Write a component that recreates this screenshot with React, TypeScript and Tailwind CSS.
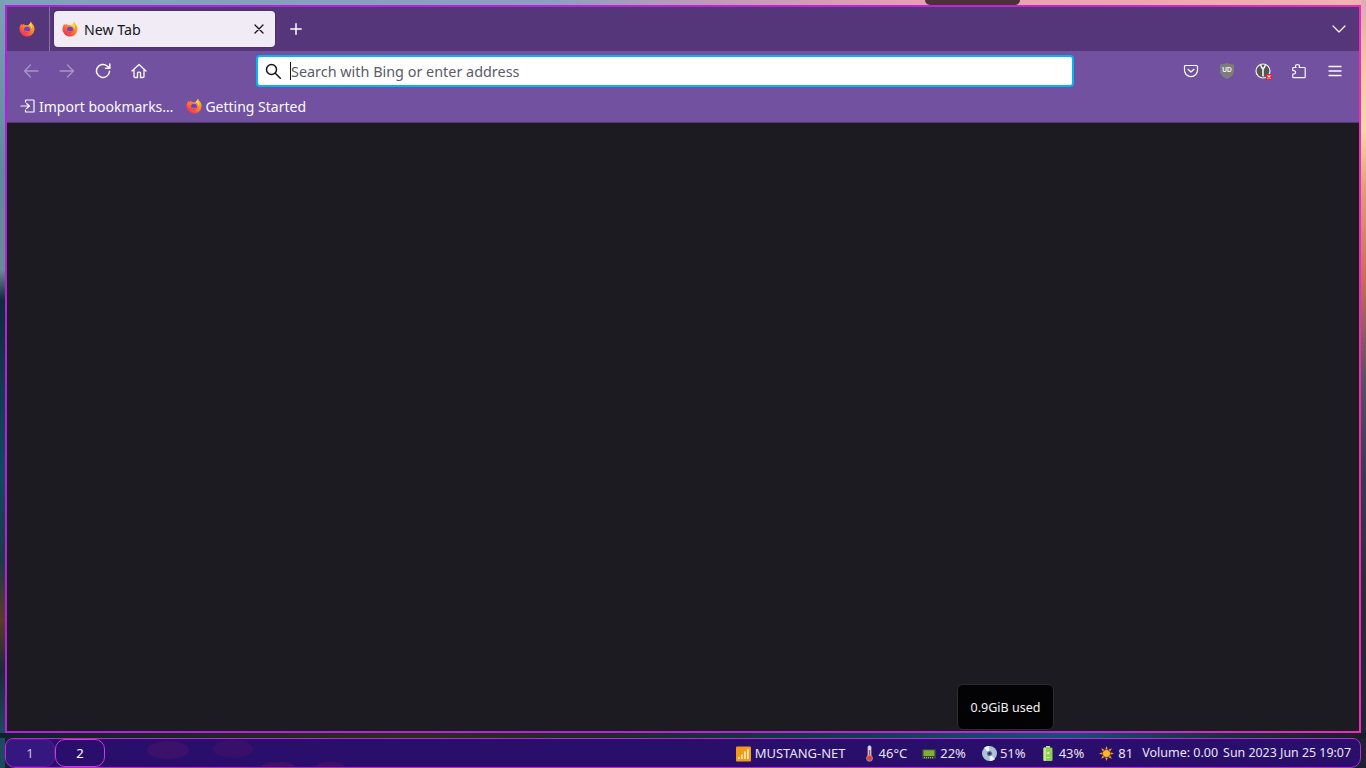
import React from "react";

function FirefoxLogo({ size = 16, id }: { size?: number; id: string }) {
  return (
    <svg width={size} height={size} viewBox="0 0 16 16" className="shrink-0">
      <defs>
        <linearGradient id={id} x1="0.85" y1="0.1" x2="0.2" y2="0.95">
          <stop offset="0" stopColor="#ffb52e" />
          <stop offset="0.5" stopColor="#ff7a2a" />
          <stop offset="1" stopColor="#ee2a5f" />
        </linearGradient>
      </defs>
      <path
        d="M12 .6c.3 1.2 1 1.9 1.9 3 1.1 1.4 1.700 3 1.600 4.800A7.500 7.500 0 1 1 1.600 4.100c.2-.5.5-.9.9-1.300 0 .6.2 1.100.6 1.500.5-.9 1.400-1.400 2.500-1.500.2 0 .3.100.2.200-.4.300-.7.700-.9 1.200 2.600-.8 5.700.1 6.800 2.300C12.400 4.600 11.300 2.600 12 .6z"
        fill={`url(#${id})`}
      />
      <circle cx="8" cy="8.800" r="3" fill="#6a3fd8" />
      <path d="M4.500 8.500c.5 2.400 3.300 3.800 5.600 2.700 1.200-.6 1.800-1.700 1.900-3-.800 1.200-2 1.900-3.500 1.800-1.700-.1-3-.5-4-1.500z" fill="#f9611f" />
      <path d="M8.800 4.600c1.900.2 3.400 1.500 3.700 3.200.9-1 1-2.800.1-4.300-.5-.8-.8-1.800-.6-2.900-.8 1.500-1.300 2.800-3.200 4z" fill="#ffd93b" />
    </svg>
  );
}

function Glyph({ d, size = 16, width = 1.4, dim = false }: { d: string; size?: number; width?: number; dim?: boolean }) {
  return (
    <svg
      width={size}
      height={size}
      viewBox="0 0 16 16"
      fill="none"
      stroke="#fbfbfe"
      strokeWidth={width}
      strokeLinecap="round"
      strokeLinejoin="round"
      className={dim ? "shrink-0 opacity-40" : "shrink-0"}
    >
      <path d={d} />
    </svg>
  );
}

function Pocket() {
  return (
    <svg width="16" height="16" viewBox="0 0 16 16" fill="none" stroke="#fbfbfe" strokeWidth="1.200" strokeLinecap="round" strokeLinejoin="round">
      <path d="M2.500 2.500h11c.6 0 1 .4 1 1v3.800A6.500 6.300 0 0 1 8 13.600 6.500 6.300 0 0 1 1.500 7.300V3.500c0-.6.4-1 1-1z" />
      <path d="M5 6.300l3 2.700 3-2.700" />
    </svg>
  );
}

function Ublock() {
  return (
    <svg width="16" height="16" viewBox="0 0 16 16">
      <path d="M8 0c2 .9 4.300 1.300 7 1.400v6.500c0 3.400-3 6.300-7 8.100-4-1.800-7-4.700-7-8.100V1.400C3.700 1.300 6 .9 8 0z" fill="#7d7d7d" />
      <text x="8" y="9.300" textAnchor="middle" fontSize="6.500" fontWeight="600" fill="#f4f4f4" fontFamily="'Liberation Sans', sans-serif">UD</text>
    </svg>
  );
}

function KeyExtension() {
  return (
    <svg width="17" height="17" viewBox="0 0 17 17">
      <circle cx="8" cy="8" r="7" fill="#555" stroke="#f4f4f4" strokeWidth="1.200" />
      <path d="M5 2.300C5.600 4.500 6.600 5.800 7.200 6.600v7h1.600v-7c.6-.8 1.600-2.100 2.200-4.300l-1.400-.5C9.300 3 8.700 4 8 4.800 7.300 4 6.700 3 6.400 1.800z" fill="#f4f4f4" />
      <rect x="11" y="11" width="6" height="6" fill="#ee1c3a" />
      <path d="M12.400 12.400l3.200 3.200M15.600 12.400l-3.200 3.200" stroke="#fff" strokeWidth="1.100" />
    </svg>
  );
}

function ImportIcon() {
  return (
    <svg width="16" height="16" viewBox="0 0 16 16" fill="none" stroke="#fbfbfe" strokeWidth="1.200" strokeLinejoin="round" strokeLinecap="round">
      <path d="M5.500 4V2.600c0-.4.300-.6.600-.6h7.300c.4 0 .6.300.6.600v10.800c0 .4-.3.600-.6.600H6.100c-.4 0-.6-.3-.6-.6V12" />
      <path d="M1 8h8M6.500 5.500L9.500 8l-3 2.500" />
    </svg>
  );
}

function WifiEmoji() {
  return (
    <svg width="15" height="16" viewBox="0 0 15 16">
      <rect x="0" y="0.500" width="15" height="15" rx="1" fill="#f59a16" />
      <path d="M2 13h1.800v-2H2zM5 13h1.800V8.500H5zM8 13h1.800V5.500H8zM11 13h1.800V3H11z" fill="#ffe6b8" />
    </svg>
  );
}

function ThermoEmoji() {
  return (
    <svg width="11" height="17" viewBox="0 0 11 17">
      <rect x="3.800" y="0.500" width="3.400" height="12" rx="1.700" fill="#d9dfe6" stroke="#8b949c" strokeWidth="0.500" />
      <rect x="4.800" y="5" width="1.400" height="8" fill="#d8453a" />
      <circle cx="5.500" cy="13.300" r="3" fill="#d8453a" stroke="#b9bfc6" strokeWidth="0.600" />
    </svg>
  );
}

function MemoryEmoji() {
  return (
    <svg width="14" height="12" viewBox="0 0 14 12">
      <rect x="0" y="1" width="14" height="10" rx="1" fill="#3c3f36" />
      <rect x="1.500" y="2.200" width="11" height="5.800" fill="#7fae38" />
      <path d="M2 9h1v1.300H2zM4 9h1v1.300H4zM6 9h1v1.300H6zM8 9h1v1.300H8zM10 9h1v1.300h-1z" fill="#a8a898" />
    </svg>
  );
}

function DiscEmoji() {
  return (
    <svg width="15" height="15" viewBox="0 0 15 15">
      <circle cx="7.500" cy="7.500" r="7.500" fill="#a9c4d6" />
      <path d="M7.500 7.500L2 1.800A7.500 7.500 0 0 1 7 0zM7.500 7.500L13 13.200A7.500 7.500 0 0 1 8 15z" fill="#eef4f8" />
      <circle cx="7.500" cy="7.500" r="2.600" fill="#5f7a8c" />
      <circle cx="7.500" cy="7.500" r="1.200" fill="#2a1070" />
    </svg>
  );
}

function BatteryEmoji() {
  return (
    <svg width="10" height="15" viewBox="0 0 10 15">
      <rect x="3" y="0" width="4" height="2" fill="#c7cfb8" />
      <rect x="0.500" y="1.500" width="9" height="13.500" rx="1.200" fill="#8fd04e" />
      <rect x="0.500" y="1.500" width="2.500" height="13.500" rx="1" fill="#c4ea8c" />
      <path d="M4 7h2.500M5.200 5.700v2.600M4 11.500h2.500" stroke="#f2fae2" strokeWidth="0.900" />
    </svg>
  );
}

function SunEmoji() {
  return (
    <svg width="15" height="15" viewBox="0 0 15 15">
      <g fill="#f7a21b">
        <path d="M7.500 0l1.300 3.500H6.200zM7.500 15l-1.300-3.500h2.600zM0 7.500l3.500-1.300v2.600zM15 7.500l-3.500 1.300V6.200z" />
        <path d="M2.200 2.200l3.400 1.500-1.900 1.900zM12.800 12.800l-3.400-1.500 1.900-1.900zM12.800 2.200l-1.500 3.400-1.900-1.900zM2.200 12.800l1.500-3.400 1.900 1.900z" />
      </g>
      <circle cx="7.500" cy="7.500" r="3.600" fill="#fbb92a" />
    </svg>
  );
}

function Wallpaper() {
  // faint jellyfish shapes that show through the translucent bar
  return (
    <svg width="420" height="28" viewBox="0 0 420 28" className="pointer-events-none absolute left-[92px] top-0">
      <ellipse cx="70" cy="11" rx="21" ry="9" fill="#6a1a6a" opacity="0.28" />
      <ellipse cx="135" cy="10" rx="20" ry="9" fill="#6a1a6a" opacity="0.24" />
      <ellipse cx="180" cy="27" rx="16" ry="4" fill="#7a1a5a" opacity="0.3" />
      <ellipse cx="232" cy="27" rx="14" ry="4" fill="#7a1a5a" opacity="0.25" />
    </svg>
  );
}

export default function App() {
  return (
    <div className="relative flex h-screen w-screen flex-col overflow-hidden px-[5px] pt-[5px] font-['Noto_Sans',sans-serif] [background:linear-gradient(to_bottom,#7aa0b5_0,#5f8a9e_170px,#6a8a98_270px,#0e2a3c_300px,#123a50_390px,#0f4a5f_470px,#1a3a48_560px,#5a3a2a_620px,#1a2a35_670px,#1d4a60_735px,#1d4a60_100%)_left/5px_100%_no-repeat,linear-gradient(to_bottom,#e0a8b8_0,#f5c8a8_70px,#f6d8a8_130px,#e59a80_190px,#c96a60_280px,#5a5060_380px,#3a3a50_470px,#2a2a35_600px,#1e2030_100%)_right/5px_100%_no-repeat,linear-gradient(to_bottom,transparent_0,transparent_8px,#14222e_8px)_no-repeat,linear-gradient(to_right,#7ba3b8_0,#8c9fc0_40%,#c09ab8_52%,#e8a0b0_68%,#eaa6ac_80%,#f0b4b0_100%)]">
      {/* rock on the wallpaper above the window */}
      <div className="absolute left-[925px] top-0 h-[5px] w-[95px] rounded-b-[20px] bg-[#4a3238]" />
      <div className="absolute bottom-[30px] left-0 h-[5px] w-full bg-[linear-gradient(to_right,#10202c,#2a2c20_30%,#1c2a2a_45%,#10384a_60%,#15507a_78%,#1a2c3c_90%,#1a1c28)]" />

      {/* browser window */}
      <div className="relative z-10 h-[728px] w-[1356px] shrink-0 bg-[linear-gradient(to_right,#b41fe0,#c224d8_80%,#f02ab8)] p-[2px]">
        <div className="flex h-full flex-col bg-[#1c1b22]">
          <div className="flex h-[44px] shrink-0 items-center bg-[#56367a]">
            <div className="flex h-full w-[43px] items-center justify-center border-r border-[#8a72a8] pr-[2px]">
              <FirefoxLogo id="ff-view" />
            </div>
            <div className="ml-[4px] flex h-[36px] w-[221px] items-center rounded-[4px] bg-[#f0ebf5] pl-[8px] pr-[10px] shadow-[0_0_2px_rgba(0,0,0,0.3)]">
              <FirefoxLogo id="ff-tab" />
              <span className="ml-[6px] pt-[2px] text-[14.200px] text-[#15141a]">New Tab</span>
              <svg width="12" height="12" viewBox="0 0 12 12" className="ml-auto" fill="none" stroke="#15141a" strokeWidth="1.300" strokeLinecap="round">
                <path d="M2 2l8 8M10 2l-8 8" />
              </svg>
            </div>
            <div className="ml-[15px]">
              <svg width="12" height="12" viewBox="0 0 12 12" fill="none" stroke="#fbfbfe" strokeWidth="1.500" strokeLinecap="round">
                <path d="M6 .8v10.400M.8 6h10.400" />
              </svg>
            </div>
            <svg width="14" height="8" viewBox="0 0 14 8" className="ml-auto mr-[13px]" fill="none" stroke="#fbfbfe" strokeWidth="1.200" strokeLinecap="round" strokeLinejoin="round">
              <path d="M1 1l6 6 6-6" />
            </svg>
          </div>

          <div className="flex h-[72px] shrink-0 flex-col border-b border-[#56367a] bg-[#7151a0]">
            <div className="flex h-[40px] shrink-0 items-center">
              <div className="flex w-[249px] shrink-0 items-center gap-[20px] pl-[16px]">
                <Glyph dim d="M15 8H1.500M7.500 2L1.500 8l6 6" />
                <Glyph dim d="M1 8h13.500M8.500 2l6 6-6 6" />
                <Glyph width={1.500} d="M14.500 8.300A6.500 6.500 0 1 1 12.200 3L14.800 5.200M14.800 1v4.200h-4.200" />
                <Glyph width={1.300} d="M1 8L8 1.500 15 8M3 6.300v7.200c0 .6.4 1 1 1h2.500V10c0-.5.4-.9.9-.9h1.200c.5 0 .9.400.9.900v4.500H12c.6 0 1-.4 1-1V6.300" />
              </div>
              <div className="flex h-[32px] w-[818px] shrink-0 items-center rounded-[4px] border-2 border-[#00b8f0] bg-white pl-[7px]">
                <svg width="16" height="16" viewBox="0 0 16 16" className="shrink-0" fill="none" stroke="#15141a" strokeWidth="1.500" strokeLinecap="round">
                  <circle cx="6.500" cy="6.500" r="5" />
                  <path d="M10.300 10.300l5 5" />
                </svg>
                <div className="ml-[9px] h-[18px] w-px bg-[#15141a]" />
                <span className="pt-[2px] text-[14.400px] text-[#5b5b66]">Search with Bing or enter address</span>
              </div>
              <div className="ml-auto flex items-center gap-[20px] pr-[16px]">
                <Pocket />
                <Ublock />
                <div className="-mr-[1px]">
                  <KeyExtension />
                </div>
                <Glyph width={1.200} d="M6.500 1.500c1.200 0 2 .8 2 1.800 0 .5-.2.900-.4 1.200h5.400c.4 0 .7.300.7.700V14c0 .4-.3.700-.7.700H2.500c-.4 0-.7-.3-.7-.7v-3h1c1.100 0 1.800-.7 1.800-1.700S3.900 7.600 2.800 7.600h-1V5.200c0-.4.300-.7.700-.7H5c-.3-.3-.5-.7-.5-1.200 0-1 .8-1.800 2-1.800z" />
                <Glyph width={1.300} d="M2 3.500h12M2 8h12M2 12.500h12" />
              </div>
            </div>
            <div className="flex h-[31px] items-center pb-[1px] pl-[13px] text-[14px] text-[#fbfbfe]">
              <ImportIcon />
              <span className="ml-[3px]">Import bookmarks…</span>
              <div className="ml-[13px]">
                <FirefoxLogo id="ff-bookmark" />
              </div>
              <span className="ml-[3px]">Getting Started</span>
            </div>
          </div>

          <div className="flex-1 bg-[#1c1b22]" />
        </div>
      </div>

      {/* tooltip from the status bar */}
      <div className="absolute left-[957px] top-[684px] z-20 flex h-[46px] w-[97px] items-center justify-center rounded-[6px] border border-[#2b2b30] bg-[#030305] pt-[2px] text-[12.500px] text-[#f2f2f2]">
        0.9GiB used
      </div>

      {/* status bar */}
      <div className="relative mt-[5px] flex h-[30px] w-[1356px] shrink-0 items-center overflow-hidden rounded-[10px] rounded-t-[8px] border border-[#c026d3] bg-[#290e6c] text-[13px] text-[#e8e4f4]">
        <Wallpaper />
        <div className="relative -ml-px flex h-full">
          <div className="flex w-[50px] items-center justify-center rounded-[10px] border border-[#5a1c98] bg-[#341880] pt-[1px] text-[#c8c0dc]">1</div>
          <div className="flex w-[50px] items-center justify-center rounded-[10px] border border-[#c83cd8] pt-[1px] text-white">2</div>
        </div>
        <div className="relative ml-auto flex items-center pr-[9px] pt-[1px]">
          <div className="flex items-center gap-[4px]">
            <WifiEmoji />
            <span>MUSTANG-NET</span>
          </div>
          <div className="ml-[18px] flex items-center gap-[4px]">
            <ThermoEmoji />
            <span>46°C</span>
          </div>
          <div className="ml-[15px] flex items-center gap-[4px]">
            <MemoryEmoji />
            <span>22%</span>
          </div>
          <div className="ml-[16px] flex items-center gap-[3px]">
            <DiscEmoji />
            <span>51%</span>
          </div>
          <div className="ml-[17px] flex items-center gap-[6px]">
            <BatteryEmoji />
            <span>43%</span>
          </div>
          <div className="ml-[15px] flex items-center gap-[4px]">
            <SunEmoji />
            <span>81</span>
          </div>
          <span className="ml-[9px] text-[12.500px]">Volume: 0.00</span>
          <span className="ml-[5px] text-[12.400px]">Sun 2023 Jun 25 19:07</span>
        </div>
      </div>
    </div>
  );
}
